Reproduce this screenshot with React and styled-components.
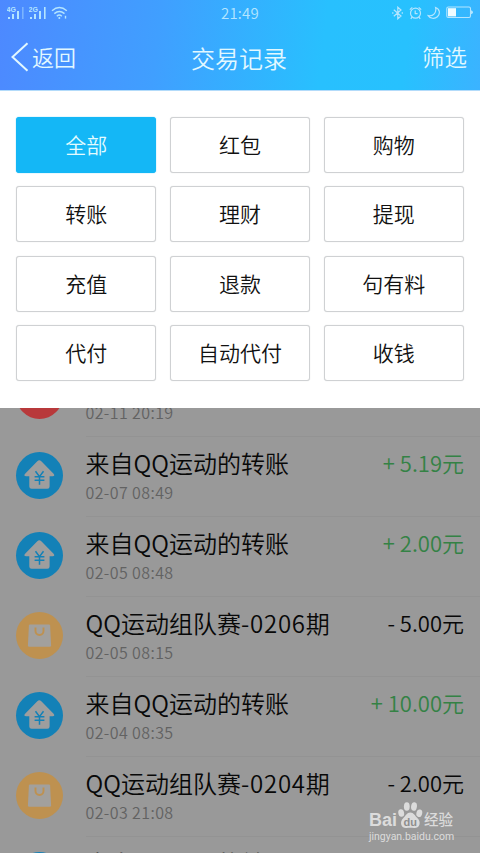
import styled, { createGlobalStyle } from 'styled-components';

// Colors:
// ----------------------------------------------------------
// active blue: #14b7f6
// option border: #cfd1d3
// dimmed list background: #999999
// dimmed icons: blue #1381b7 | orange #be9150 | red #b8393b
// dimmed income green: #348245
// ----------------------------------------------------------

const GlobalStyle = createGlobalStyle`
    * { box-sizing: border-box; }
    body {
        margin: 0;
        font-family: "Noto Sans CJK SC", sans-serif;
        font-weight: 350;
    }
    svg { display: block; }
`
const Screen = styled.div`
    position: relative;
    display: flex;
    flex-direction: column;
    width: 480px;
    height: 853px;
    overflow: hidden;
    background: #999999;
`
const Header = styled.header`
    flex: none;
    height: 91px;
    border-bottom: 1px solid #b3dbfa;
    background: linear-gradient(97deg, #4d89ff 0%, #409fff 33%, #28c0fe 67%, #27c1fe 84%, #3bb3ff 100%);
    color: #e2f8ff;
`
const StatusBar = styled.div`
    display: grid;
    grid-template-columns: 1fr auto 1fr;
    align-items: center;
    height: 25px;
    padding: 0 7px;
    color: #b4e5ff;
`
const StatusIcons = styled.div`
    display: flex;
    align-items: center;
    justify-content: ${({ $end }) => ($end ? 'flex-end' : 'flex-start')};
    gap: ${({ $gap }) => $gap}px;
`
const Clock = styled.span`
    font-size: 15px;
    line-height: 25px;
    letter-spacing: 0.2px;
`
const NavBar = styled.div`
    display: grid;
    grid-template-columns: 1fr auto 1fr;
    align-items: center;
    height: 66px;
    padding: 0 13px 0 11px;
`
const BackLink = styled.div`
    display: flex;
    align-items: center;
    gap: 3px;
    padding-bottom: 2px;
    font-size: 22px;
    line-height: 30px;
`
const BackText = styled.span`
    padding-bottom: 2px;
`
const Title = styled.div`
    font-size: 24px;
    line-height: 32px;
`
const FilterLink = styled.div`
    padding-bottom: 5px;
    font-size: 22.5px;
    line-height: 30px;
    text-align: right;
`
const FilterPanel = styled.div`
    display: grid;
    flex: none;
    grid-template-columns: repeat(3, 1fr);
    grid-template-rows: repeat(4, 56px);
    gap: 13.3px;
    height: 317px;
    padding: 26px 16px;
    background: #ffffff;
`
const Option = styled.div`
    display: flex;
    align-items: center;
    justify-content: center;
    padding-bottom: 2px;
    border: 1.5px solid ${({ $active }) => ($active ? '#14b7f6' : '#cfd1d3')};
    border-radius: 3px;
    box-shadow: 0 0 1px ${({ $active }) => ($active ? '#14b7f6' : '#cfd1d3')};
    background: ${({ $active }) => ($active ? '#14b7f6' : '#ffffff')};
    color: ${({ $active }) => ($active ? '#e2fbff' : '#111111')};
    font-size: 21px;
    line-height: 28px;
`
const List = styled.div`
    flex: 1;
    min-height: 0;
    overflow: hidden;
`
const Row = styled.div`
    display: flex;
    height: 80px;
    padding: 0 0 0 16px;
    &:first-child { margin-top: -51px; }
`
const Badge = styled.div`
    flex: none;
    width: 47px;
    height: 47px;
    margin: 14.5px 22.5px 0 0;
    border-radius: 50%;
    background: ${({ $color }) => $color};
`
const RowBody = styled.div`
    display: flex;
    flex: 1;
    justify-content: space-between;
    padding: 9px 16px 0 0;
    border-bottom: 1px solid #939393;
    white-space: nowrap;
`
const RowTitle = styled.div`
    color: #080808;
    font-size: 24px;
    line-height: 34px;
`
const Period = styled.span`
    letter-spacing: 0.8px;
`
const RowDate = styled.div`
    color: #626262;
    font-size: 16px;
    line-height: 25px;
    letter-spacing: 0.4px;
`
const Amount = styled.div`
    color: ${({ $income }) => ($income ? '#348245' : '#080808')};
    font-size: 22px;
    line-height: 33px;
`
const Watermark = styled.div`
    position: absolute;
    right: 23px;
    bottom: 9px;
    width: 88px;
    color: #dcdcdc;
`
const WatermarkLogo = styled.div`
    display: flex;
    align-items: flex-end;
    height: 28px;
    font-family: "Liberation Sans", "Noto Sans CJK SC", sans-serif;
    font-size: 18px;
    font-weight: 700;
    line-height: 18px;
`
const WatermarkName = styled.span`
    font-size: 14.5px;
    font-weight: 500;
`
const WatermarkUrl = styled.div`
    font-family: Roboto, sans-serif;
    font-size: 10.5px;
    font-weight: 400;
    line-height: 15px;
`

const SignalIcon = ({ label }) => (
    <svg width="18" height="16" viewBox="0 0 18 16" fill="currentColor">
        <text x="-0.5" y="6.5" fontSize="7" fontWeight="700" fontFamily="Liberation Sans, sans-serif">{label}</text>
        <rect x="1" y="12" width="2" height="2" />
        <rect x="5" y="9" width="2" height="5" />
        <rect x="10" y="6" width="2" height="8" />
        <rect x="15" y="2" width="1.6" height="12" opacity={label === '4G' ? 0.45 : 1} />
    </svg>
)

const WifiIcon = () => (
    <svg width="17" height="14" viewBox="0 0 17 14" fill="none" stroke="currentColor" strokeWidth="1.4">
        <path d="M1 4.8Q8.3-1.6 15.8 4.8M3.3 7.6Q8.3 3.2 13.5 7.6M5.8 10.2Q8.3 8 10.8 10.2" />
        <circle cx="8.3" cy="12" r="1" fill="currentColor" stroke="none" />
        <path d="M14.5 9.8v2.8" />
    </svg>
)

const BluetoothIcon = () => (
    <svg width="12" height="14" viewBox="0 0 12 14" fill="none" stroke="currentColor" strokeWidth="1.2">
        <path d="M1.8 3.8 9 10 5.8 12.8V1.2L9 4 1.8 10.2M10.3 6.3v1.4M.8 6.3v1.4" />
    </svg>
)

const AlarmIcon = () => (
    <svg width="13" height="14" viewBox="0 0 13 14" fill="none" stroke="currentColor" strokeWidth="1.2">
        <circle cx="6.5" cy="7.2" r="5" />
        <path d="M6.2 4.5v3.2h2.4M.8 3.6 3.3 1.4M12.2 3.6 9.7 1.4M3 11.2 1.8 12.8M10 11.2l1.2 1.6" />
    </svg>
)

const MoonIcon = () => (
    <svg width="14" height="14" viewBox="0 0 14 14" fill="none" stroke="currentColor" strokeWidth="1.2">
        <path d="M8.6 1.5C13 3 13.5 8 10.4 10.8 7.5 13.4 3 12.5 1.2 9.6 6.3 10.6 9.8 6.5 8.6 1.5Z" />
    </svg>
)

const BatteryIcon = () => (
    <svg width="27" height="13" viewBox="0 0 27 13" fill="none" stroke="currentColor">
        <rect x="0.8" y="1" width="23.7" height="10.5" rx="1.5" strokeWidth="1.1" />
        <rect x="2" y="2.2" width="8" height="8.2" fill="#effcff" stroke="none" />
        <path d="M25 4.2q2 .5 2 2t-2 2Z" fill="currentColor" stroke="none" />
    </svg>
)

const BackIcon = () => (
    <svg width="18" height="30" viewBox="0 0 18 30" fill="none" stroke="currentColor" strokeWidth="2">
        <path d="M16.5 1.2 1.5 15l15 13.8" />
    </svg>
)

const HouseIcon = () => (
    <svg width="47" height="47" viewBox="0 0 47 47">
        <path
            d="M21.3 9.2q2-1.8 4 0l12.3 12.6q1.8 2.2-1 2.4h-3v10.3q0 2.3-2.3 2.3H15.6q-2.3 0-2.3-2.3V24.2h-3.2q-2.9-.2-1-2.4Z"
            fill="#9e9e9e"
        />
        <path d="m19.5 19.3 4 5.3 4-5.3M18.6 24.8h9.8M18.6 28.3h9.8M23.5 24.5v8.3" fill="none" stroke="#1381b7" strokeWidth="1.5" />
    </svg>
)

const BagIcon = () => (
    <svg width="47" height="47" viewBox="0 0 47 47">
        <path d="M14 12.5h19q1 0 1.1 1l1 20q0 1.3-1.3 1.3H13.2q-1.3 0-1.3-1.3l1-20q.1-1 1.1-1Z" fill="#a2a09d" />
        <path d="M19.5 15.5v3.5a4 4 0 0 0 8 0v-3.5" fill="none" stroke="#be9150" strokeWidth="1.9" />
    </svg>
)

const PawIcon = () => (
    <svg width="27" height="28" viewBox="0 0 27 28" fill="currentColor">
        <ellipse cx="4.2" cy="12" rx="2.9" ry="3.8" transform="rotate(-12 4.2 12)" />
        <ellipse cx="9.8" cy="5.5" rx="2.9" ry="4.3" />
        <ellipse cx="17" cy="5.5" rx="2.9" ry="4.3" transform="rotate(8 17 5.5)" />
        <ellipse cx="22.3" cy="12.2" rx="2.9" ry="3.8" transform="rotate(14 22.3 12.2)" />
        <path d="M13.3 11.5c3.5 0 4.8 3.4 6.8 5.3 2.5 2.3 3 4.7 2.3 7-.8 2.7-3.3 3.5-5.4 3.2-2.6-.4-4.8-.4-7.4 0-2.1.3-4.6-.5-5.3-3.2-.7-2.3-.1-4.7 2.3-7 2-1.9 3.2-5.3 6.7-5.3Z" />
        <text x="13.3" y="25" fontSize="11" fontWeight="700" textAnchor="middle" fontFamily="Liberation Sans, sans-serif" fill="#8e8e8e">du</text>
    </svg>
)

const BADGES = {
    house: { color: '#1381b7', icon: <HouseIcon /> },
    bag: { color: '#be9150', icon: <BagIcon /> },
    packet: { color: '#b8393b', icon: null },
}

const OPTIONS = [
    '全部', '红包', '购物',
    '转账', '理财', '提现',
    '充值', '退款', '句有料',
    '代付', '自动代付', '收钱',
]

const teamTitle = (period) => <>QQ运动组队赛<Period>-{period}</Period>期</>

const RECORDS = [
    { type: 'packet', title: '', date: '02-11 20:19', amount: '' },
    { type: 'house', title: '来自QQ运动的转账', date: '02-07 08:49', amount: '+ 5.19元', income: true },
    { type: 'house', title: '来自QQ运动的转账', date: '02-05 08:48', amount: '+ 2.00元', income: true },
    { type: 'bag', title: teamTitle('0206'), date: '02-05 08:15', amount: '- 5.00元' },
    { type: 'house', title: '来自QQ运动的转账', date: '02-04 08:35', amount: '+ 10.00元', income: true },
    { type: 'bag', title: teamTitle('0204'), date: '02-03 21:08', amount: '- 2.00元' },
    { type: 'house', title: '来自QQ运动的转账', date: '', amount: '' },
]

const Record = ({ type, title, date, amount, income }) => (
    <Row>
        <Badge $color={BADGES[type].color}>{BADGES[type].icon}</Badge>
        <RowBody>
            <div>
                <RowTitle>{title || '\u00a0'}</RowTitle>
                <RowDate>{date}</RowDate>
            </div>
            <Amount $income={income}>{amount}</Amount>
        </RowBody>
    </Row>
)

const App = () => (
    <>
        <GlobalStyle />
        <Screen>
            <Header>
                <StatusBar>
                    <StatusIcons $gap={4}>
                        <SignalIcon label="4G" />
                        <SignalIcon label="2G" />
                        <WifiIcon />
                    </StatusIcons>
                    <Clock>21:49</Clock>
                    <StatusIcons $end $gap={5}>
                        <BluetoothIcon />
                        <AlarmIcon />
                        <MoonIcon />
                        <BatteryIcon />
                    </StatusIcons>
                </StatusBar>
                <NavBar>
                    <BackLink>
                        <BackIcon />
                        <BackText>返回</BackText>
                    </BackLink>
                    <Title>交易记录</Title>
                    <FilterLink>筛选</FilterLink>
                </NavBar>
            </Header>
            <FilterPanel>
                {OPTIONS.map((name, i) => (
                    <Option key={name} $active={i === 0}>{name}</Option>
                ))}
            </FilterPanel>
            <List>
                {RECORDS.map((record, i) => (
                    <Record key={i} {...record} />
                ))}
            </List>
            <Watermark>
                <WatermarkLogo>
                    Bai
                    <PawIcon />
                    <WatermarkName>经验</WatermarkName>
                </WatermarkLogo>
                <WatermarkUrl>jingyan.baidu.com</WatermarkUrl>
            </Watermark>
        </Screen>
    </>
)

export default App;
